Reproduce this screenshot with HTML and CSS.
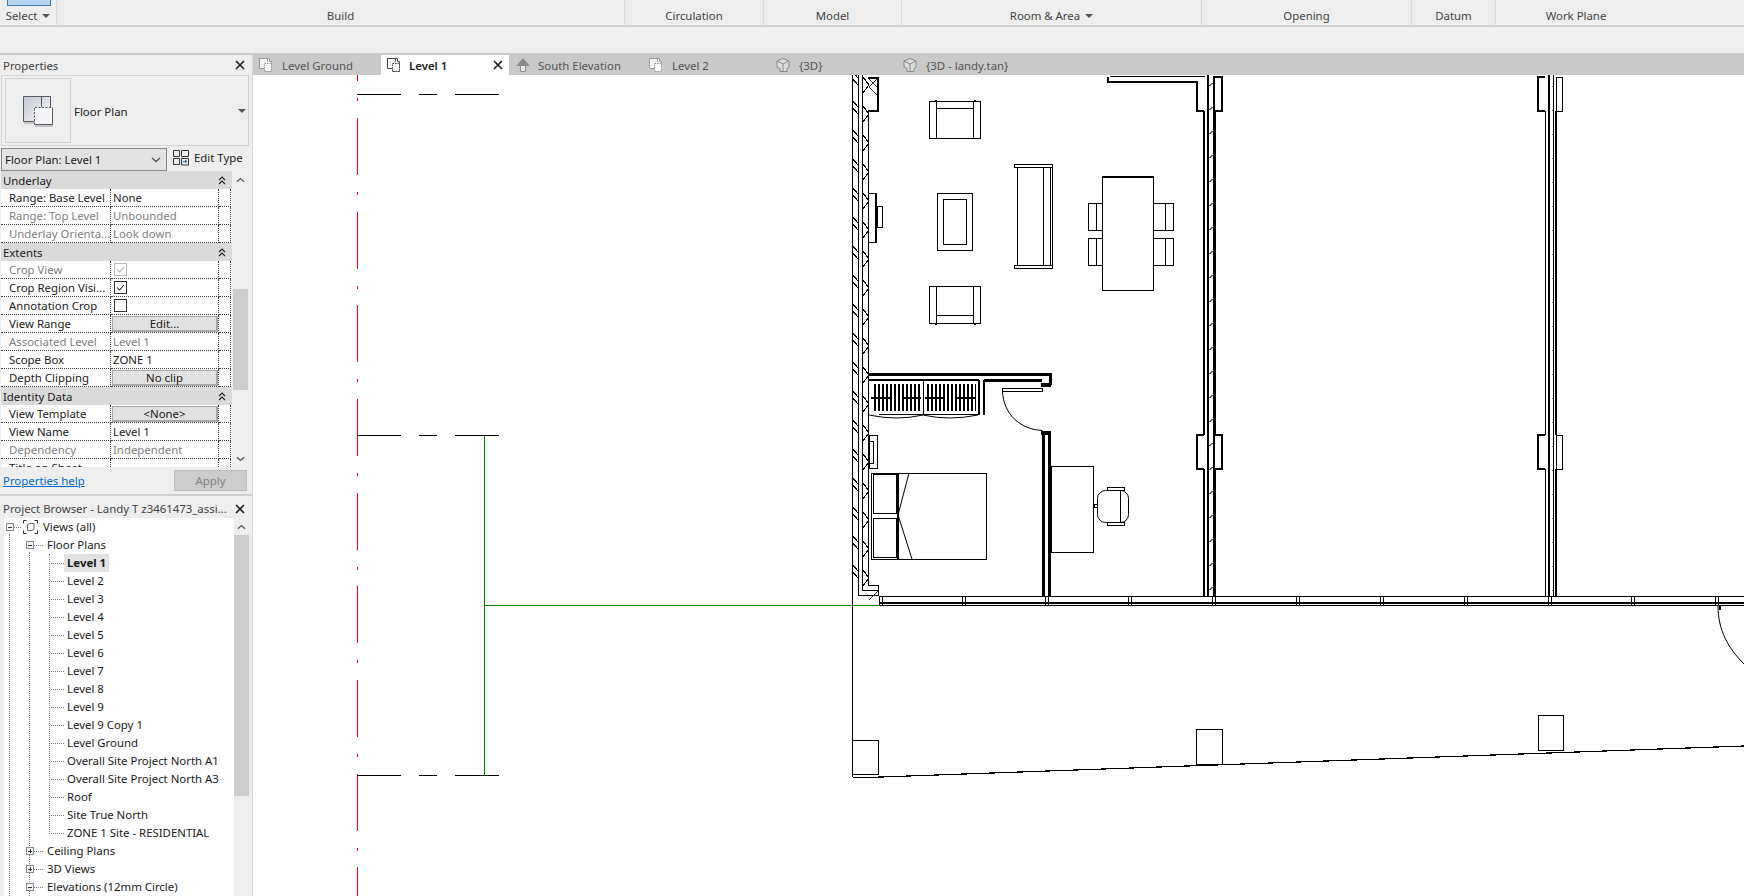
FILE: index.html
```html
<!DOCTYPE html>
<html lang="en">
<head>
    <meta charset="UTF-8">
    <title>Level 1 - Floor Plan</title>
    <link rel="stylesheet" href="styles.css">
</head>
<body>
    <!-- shared icons -->
    <svg class="defs" width="0" height="0">
        <symbol id="plan" viewBox="0 0 16 16">
            <path d="M1.5 1.5h10v3h2v10h-7v-3h-5z" fill="#f4f4f4" stroke="currentColor"/>
            <path d="M6.5 6.5h7v8h-7z" fill="#fff" stroke="currentColor" stroke-dasharray="1.5 1"/>
            <path d="M9.5 1.5v3" stroke="currentColor"/>
        </symbol>
        <symbol id="elev" viewBox="0 0 16 16">
            <path d="M8 1l7 8h-4v6H5V9H1z" fill="#e8e8e8" stroke="none"/>
            <path d="M8 1l7 8H1z" fill="#8a8a8a"/>
            <path d="M5.5 9v5.5h5V9" fill="none" stroke="#8a8a8a"/>
        </symbol>
        <symbol id="cube" viewBox="0 0 16 16">
            <path d="M8 1.5l6 2.5v6l-2 1.5v3H5v-3l-3-1.5V4z" fill="#dcdcdc" stroke="#8a8a8a"/>
            <path d="M2 4l6 3 6-3M8 7v7" fill="none" stroke="#8a8a8a"/>
        </symbol>
        <symbol id="close" viewBox="0 0 12 12">
            <path d="M2 2l8 8M10 2l-8 8" stroke="#222" stroke-width="1.7" fill="none"/>
        </symbol>
        <symbol id="up" viewBox="0 0 10 6">
            <path d="M1 5l4-3.5L9 5" stroke="#555" stroke-width="1.4" fill="none"/>
        </symbol>
        <symbol id="down" viewBox="0 0 10 6">
            <path d="M1 1l4 3.5L9 1" stroke="#555" stroke-width="1.4" fill="none"/>
        </symbol>
        <symbol id="fold" viewBox="0 0 8 9">
            <path d="M1 4l3-3 3 3M1 8l3-3 3 3" stroke="#222" stroke-width="1.2" fill="none"/>
        </symbol>
        <symbol id="tick" viewBox="0 0 13 13">
            <path d="M2.5 6.5l3 3 5-6" stroke="currentColor" stroke-width="1.2" fill="none"/>
        </symbol>
    </svg>

    <div class="ribbon">
        <div class="blue-tool"></div>
        <div class="group g-select">Select <span class="caret"></span></div>
        <div class="group g-build">Build</div>
        <div class="group g-circ">Circulation</div>
        <div class="group g-model">Model</div>
        <div class="group g-room">Room &amp; Area <span class="caret"></span></div>
        <div class="group g-open">Opening</div>
        <div class="group g-datum">Datum</div>
        <div class="group g-work">Work Plane</div>
    </div>
    <div class="options-bar"></div>

    <div class="workspace">
        <div class="side">
            <div class="panel-title">
                <span>Properties</span>
                <svg class="x-btn"><use href="#close"/></svg>
            </div>
            <div class="type-box">
                <div class="type-thumb">
                    <svg width="32" height="32" viewBox="0 0 32 32">
                        <defs>
                            <linearGradient id="sheet" x1="0" y1="0" x2="1" y2="1">
                                <stop offset="0" stop-color="#c4c8d2"/>
                                <stop offset="1" stop-color="#f6f6f8"/>
                            </linearGradient>
                        </defs>
                        <path d="M1.5 1.5h27v25h-27z" fill="url(#sheet)" stroke="#555a66"/>
                        <path d="M19.500 1.500v11" stroke="#555a66" fill="none"/>
                        <path d="M12.500 12.500h18v17h-18z" fill="#f5f5f7" stroke="none"/>
                        <path d="M12.500 29.500v-17h18" fill="none" stroke="#555a66" stroke-dasharray="2 1.500"/>
                        <path d="M30.500 12.500v17h-18" fill="none" stroke="#555a66"/>
                        <path d="M2 28h10M13 31h18" stroke="#999"/>
                    </svg>
                </div>
                <span class="type-name">Floor Plan</span>
                <span class="caret type-caret"></span>
            </div>
            <div class="selector-row">
                <div class="selector">
                    <span>Floor Plan: Level 1</span>
                    <svg class="sel-chev"><use href="#down"/></svg>
                </div>
                <div class="edit-type">
                    <svg width="17" height="17" viewBox="0 0 17 17" fill="none" stroke="#333">
                        <path d="M.5 1.5h6v6h-6zM.5 9.5h6v6h-6zM8.5 1.5h7v6h-7zM8.5 9.5h7v6.500h-7z"/>
                        <path d="M10 12.500h3M12 11l2 1.500-2 1.500" stroke="#2b6ca8"/>
                    </svg>
                    <span>Edit Type</span>
                </div>
            </div>

            <div class="props">
                <div class="grid">
                    <div class="head">Underlay <svg class="fold"><use href="#fold"/></svg></div>
                    <div class="row"><div class="name">Range: Base Level</div><div class="val">None</div><div class="pad"></div></div>
                    <div class="row off"><div class="name">Range: Top Level</div><div class="val">Unbounded</div><div class="pad"></div></div>
                    <div class="row off"><div class="name">Underlay Orienta...</div><div class="val">Look down</div><div class="pad"></div></div>
                    <div class="head">Extents <svg class="fold"><use href="#fold"/></svg></div>
                    <div class="row off"><div class="name">Crop View</div><div class="val"><span class="check"><svg><use href="#tick"/></svg></span></div><div class="pad"></div></div>
                    <div class="row"><div class="name">Crop Region Visi...</div><div class="val"><span class="check"><svg><use href="#tick"/></svg></span></div><div class="pad"></div></div>
                    <div class="row"><div class="name">Annotation Crop</div><div class="val"><span class="check"></span></div><div class="pad"></div></div>
                    <div class="row"><div class="name">View Range</div><div class="val btn-cell"><span class="cell-btn">Edit...</span></div><div class="pad"></div></div>
                    <div class="row off"><div class="name">Associated Level</div><div class="val">Level 1</div><div class="pad"></div></div>
                    <div class="row"><div class="name">Scope Box</div><div class="val">ZONE 1</div><div class="pad"></div></div>
                    <div class="row"><div class="name">Depth Clipping</div><div class="val btn-cell"><span class="cell-btn">No clip</span></div><div class="pad"></div></div>
                    <div class="head">Identity Data <svg class="fold"><use href="#fold"/></svg></div>
                    <div class="row"><div class="name">View Template</div><div class="val btn-cell"><span class="cell-btn">&lt;None&gt;</span></div><div class="pad"></div></div>
                    <div class="row"><div class="name">View Name</div><div class="val">Level 1</div><div class="pad"></div></div>
                    <div class="row off"><div class="name">Dependency</div><div class="val">Independent</div><div class="pad"></div></div>
                    <div class="row"><div class="name">Title on Sheet</div><div class="val"></div><div class="pad"></div></div>
                </div>
                <div class="scrollbar props-bar">
                    <svg class="arrow"><use href="#up"/></svg>
                    <div class="thumb"></div>
                    <svg class="arrow"><use href="#down"/></svg>
                </div>
            </div>
            <div class="props-foot">
                <a class="help">Properties help</a>
                <span class="apply">Apply</span>
            </div>

            <div class="panel-title browser-title">
                <span>Project Browser - Landy T z3461473_assi...</span>
                <svg class="x-btn"><use href="#close"/></svg>
            </div>
            <div class="browser">
                <div class="tree">
                    <div class="guide guide-a"></div>
                    <div class="guide guide-b"></div>
                    <div class="guide guide-c"></div>
                    <div class="node lv0"><span class="box"></span><span class="stub"></span>
                        <svg class="views-icon" width="15" height="14" viewBox="0 0 15 14" fill="none" stroke="#333">
                            <path d="M.5 3.500v-3h3M11.500.5h3v3M14.500 10.500v3h-3M3.500 13.500h-3v-3"/>
                            <path d="M4.500 4.500l2-1h4.500v5.500l-2 1.500h-4.500z" stroke="#666"/>
                        </svg>
                        <span class="label">Views (all)</span></div>
                    <div class="node lv1"><span class="box"></span><span class="stub"></span><span class="label">Floor Plans</span></div>
                    <div class="node lv2 current"><span class="label">Level 1</span></div>
                    <div class="node lv2"><span class="label">Level 2</span></div>
                    <div class="node lv2"><span class="label">Level 3</span></div>
                    <div class="node lv2"><span class="label">Level 4</span></div>
                    <div class="node lv2"><span class="label">Level 5</span></div>
                    <div class="node lv2"><span class="label">Level 6</span></div>
                    <div class="node lv2"><span class="label">Level 7</span></div>
                    <div class="node lv2"><span class="label">Level 8</span></div>
                    <div class="node lv2"><span class="label">Level 9</span></div>
                    <div class="node lv2"><span class="label">Level 9 Copy 1</span></div>
                    <div class="node lv2"><span class="label">Level Ground</span></div>
                    <div class="node lv2"><span class="label">Overall Site Project North A1</span></div>
                    <div class="node lv2"><span class="label">Overall Site Project North A3</span></div>
                    <div class="node lv2"><span class="label">Roof</span></div>
                    <div class="node lv2"><span class="label">Site True North</span></div>
                    <div class="node lv2"><span class="label">ZONE 1 Site - RESIDENTIAL</span></div>
                    <div class="node lv1"><span class="box plus"></span><span class="stub"></span><span class="label">Ceiling Plans</span></div>
                    <div class="node lv1"><span class="box plus"></span><span class="stub"></span><span class="label">3D Views</span></div>
                    <div class="node lv1"><span class="box"></span><span class="stub"></span><span class="label">Elevations (12mm Circle)</span></div>
                </div>
                <div class="scrollbar tree-bar">
                    <svg class="arrow"><use href="#up"/></svg>
                    <div class="thumb"></div>
                </div>
            </div>
        </div>

        <div class="main">
            <div class="tabs">
                <div class="tab t-ground"><svg class="tab-icon"><use href="#plan"/></svg>Level Ground</div>
                <div class="tab active"><svg class="tab-icon"><use href="#plan"/></svg><span>Level 1</span><svg class="tab-x"><use href="#close"/></svg></div>
                <div class="tab t-south"><svg class="tab-icon"><use href="#elev"/></svg>South Elevation</div>
                <div class="tab t-level2"><svg class="tab-icon"><use href="#plan"/></svg>Level 2</div>
                <div class="tab t-3d"><svg class="tab-icon"><use href="#cube"/></svg>{3D}</div>
                <div class="tab t-3dl"><svg class="tab-icon"><use href="#cube"/></svg>{3D - landy.tan}</div>
            </div>

            <!-- drawing uses page coordinates, easier to check against the plan -->
            <svg class="plan" width="1491" height="821" viewBox="253 75 1491 821" fill="none" stroke="#000" shape-rendering="crispEdges">
                <defs>
                    <pattern id="hatch-l" x="852" y="77" width="17" height="29" patternUnits="userSpaceOnUse">
                        <path d="M0 1l6 7M0 23l6 7M0 -6l6 7M11 0l6 8-6 8" stroke="#000"/>
                    </pattern>
                    <pattern id="hatch-r" x="1208" y="75" width="8" height="24" patternUnits="userSpaceOnUse">
                        <path d="M0 12l6-5" stroke="#666"/>
                    </pattern>
                    <g id="mullion"><path d="M.5 596v10M3.500 596v10"/></g>
                </defs>

                <!-- crop region and section marks -->
                <path d="M357.500 24.330V896" stroke="#f00000" stroke-dasharray="57 17 3 16.670"/>
                <path d="M357 94.500h44M419 94.500h18M455 94.500h44M357 435.500h44M419 435.500h18M455 435.500h44M357 775.500h44M419 775.500h18M455 775.500h44"/>
                <path d="M484.500 436v340M485 605.500h394" stroke="#008000"/>

                <!-- left wall -->
                <path d="M852.500 75V777M858.500 75V595h20M862.500 75V590h16M868.500 111V585h10v11"/>
                <rect x="852" y="75" width="17" height="516" fill="url(#hatch-l)" stroke="none"/>
                <path d="M868 78h10v33h-10" stroke-width="2"/>
                <path d="M869 79l8 8M877 79l-8 8M869 87l8 8" stroke="#333"/>
                <path d="M869 193.500h7v49h-7"/>
                <path d="M876 193v49" stroke-width="2"/>
                <path d="M877.500 206.500h5v21h-5z"/>
                <path d="M869.500 435.500h8v33h-8zM869.500 441.500h4v22h-4z"/>
                <path d="M869 600l9-9" stroke="#333"/>

                <!-- living room furniture -->
                <path d="M929.500 101.500h51v37h-51zM936.500 101.500v37M973.500 101.500v37M936.500 108.500h37M935 100.500h2M974 100.500h2"/>
                <path d="M929.500 286.500h51v37h-51zM936.500 286.500v37M973.500 286.500v37M936.500 315.500h37M935 324.500h2M974 324.500h2"/>
                <path d="M937.500 193.500h35v57h-35zM943.500 199.500h23v45h-23z"/>
                <path d="M1014.500 164.500h38v3h-38zM1014.500 265.500h38v3h-38zM1017.500 167.500v98M1052.500 167.500v98M1043.500 167.500v98M1050.500 167.500v98"/>
                <path d="M1102.500 177.500h51v113h-51z"/>
                <path d="M1102 177h52" stroke-width="2"/>
                <path d="M1102.500 203.500h-14v27h14M1096.500 203.500v27M1102.500 238.500h-14v27h14M1096.500 238.500v27"/>
                <path d="M1153.500 203.500h20v27h-20M1165.500 203.500v27M1153.500 238.500h20v27h-20M1165.500 238.500v27"/>

                <!-- wall at top of the apartment -->
                <path d="M1108 77v5h89v29h7" stroke-width="2"/>
                <path d="M1110 76.500h95"/>

                <!-- party wall 1 -->
                <path d="M1204 111V435" stroke-width="2"/>
                <path d="M1208 75V596" stroke-width="2"/>
                <path d="M1214.500 111V435M1214.500 469V596" stroke-width="3"/>
                <path d="M1204 469V596" stroke-width="2"/>
                <rect x="1209" y="75" width="5" height="521" fill="url(#hatch-r)" stroke="none"/>
                <path d="M1214 77h8v34h-8zM1214 435h8v34h-8z" stroke-width="2"/>
                <path d="M1204 435h-7v34h7" stroke-width="2"/>

                <!-- party wall 2 -->
                <path d="M1545.500 111V435M1545.500 469V596M1553.500 75V596"/>
                <path d="M1549 75V596M1556 111V435M1556 469V596" stroke-width="2"/>
                <rect x="1550" y="75" width="3" height="521" fill="url(#hatch-r)" stroke="none"/>
                <path d="M1545 77h-7v34h7M1545 435h-7v34h7" stroke-width="2"/>
                <path d="M1556 77h6v34h-6zM1556 435h6v34h-6z"/>

                <!-- wardrobe -->
                <path d="M869 374.500h181v10" stroke-width="3"/>
                <path d="M869 380h110" stroke-width="2"/>
                <path d="M984 380.500h58" stroke-width="3"/>
                <path d="M878.500 414.500h100"/>
                <path d="M979 380v35M984 380v35" stroke-width="2"/>
                <path d="M923.500 381v33"/>
                <path d="M874 397.500h47M927 397.500h49" stroke-width="27" stroke-dasharray="2 2"/>
                <path d="M871 397.500h19M902 397.500h19M925 397.500h20M955 397.500h21" stroke-width="2"/>
                <path d="M869 415q28 6 54 0q26 6 55 0" shape-rendering="auto"/>

                <!-- door -->
                <path d="M1002.500 388.500h40v3h-40z"/>
                <path d="M1002.500 391.500c1 22 17 38 40 39" shape-rendering="auto"/>
                <path d="M1041 385h10M1041 432.500h10" stroke-width="4"/>
                <path d="M1043.500 434V596M1049.500 434V596" stroke-width="3"/>

                <!-- bed -->
                <path d="M871.500 473.500h115v86h-115z"/>
                <path d="M873.500 474.500h23v39h-23zM873.500 518.500h23v39h-23z"/>
                <path d="M897.500 474v85" stroke-width="2"/>
                <path d="M909 473l-11 42 14 44" shape-rendering="auto"/>

                <!-- desk and chair -->
                <path d="M1051.500 466.500h42v86h-42z"/>
                <rect x="1097.500" y="490.500" width="31" height="32" rx="8" shape-rendering="auto"/>
                <path d="M1120.500 491v31M1107.500 487.500h17v3h-17zM1107.500 522.500h17v3h-17zM1094.500 504.500h3v3h-3z"/>

                <!-- glazing along the corridor -->
                <path d="M879 596.500h865M879 605.500h865"/>
                <path d="M879 603h865" stroke-width="2"/>
                <use href="#mullion" x="879"/><use href="#mullion" x="962"/><use href="#mullion" x="1045"/>
                <use href="#mullion" x="1128"/><use href="#mullion" x="1212"/><use href="#mullion" x="1296"/>
                <use href="#mullion" x="1380"/><use href="#mullion" x="1464"/><use href="#mullion" x="1548"/>
                <use href="#mullion" x="1631"/><use href="#mullion" x="1715"/>

                <!-- door at far right -->
                <path d="M1718 606c0 24 10 42 26 58" shape-rendering="auto"/>
                <path d="M1720 606v4" stroke-width="2"/>

                <!-- columns and slanted edge -->
                <path d="M852.500 740.500h26v33.500h-26M1196.500 729.500h26v34.500h-26zM1538.500 715.500h25v34.500h-25z"/>
                <path d="M853 777.500h14L1744 746" stroke-width="1.200"/>
            </svg>
        </div>
    </div>
</body>
</html>
```

FILE: styles.css
```css
* {
    box-sizing: border-box;
}
html, body {
    margin: 0;
    height: 896px;
    overflow: hidden;
}
body {
    background: #eeeeee;
    font-family: "Noto Sans", sans-serif;
    font-size: 11.4px;
    color: #1a1a1a;
}
.defs {
    position: absolute;
}

/* ribbon */
.ribbon {
    position: relative;
    display: flex;
    height: 27px;
    border-bottom: 2px solid #d0d0d0;
    color: #444;
}
.blue-tool {
    position: absolute;
    left: 7px;
    top: -1px;
    width: 44px;
    height: 7px;
    background: #b3d4f1;
    border: 1px solid #3d7ab5;
}
.group {
    display: flex;
    align-items: flex-end;
    justify-content: center;
    gap: 5px;
    height: 25px;
    padding-bottom: 2px;
    border-right: 1px solid #dcdcdc;
}
.g-select { width: 57px; }
.g-build { width: 568px; }
.g-circ { width: 139px; }
.g-model { width: 138px; }
.g-room { width: 300px; }
.g-open { width: 210px; }
.g-datum { width: 84px; }
.g-work { width: 160px; border-right: none; }
.caret {
    display: inline-block;
    width: 0;
    height: 0;
    margin-bottom: 5px;
    border-left: 4px solid transparent;
    border-right: 4px solid transparent;
    border-top: 4px solid #555;
}
.options-bar {
    height: 26px;
}

.workspace {
    display: flex;
    height: 843px;
}

/* left column */
.side {
    width: 253px;
    flex: none;
    border-top: 2px solid #c9c9c9;
    border-right: 1px solid #d8d8d8;
}
.panel-title {
    display: flex;
    align-items: center;
    justify-content: space-between;
    height: 20px;
    padding: 0 6px 0 3px;
    color: #444;
    white-space: nowrap;
}
.x-btn {
    width: 12px;
    height: 12px;
}
.type-box {
    display: flex;
    align-items: center;
    height: 71px;
    margin: 0 3px 2px 1px;
    padding-left: 3px;
    border: 1px solid #d4d4d4;
}
.type-thumb {
    display: flex;
    align-items: center;
    justify-content: center;
    width: 66px;
    height: 65px;
    border: 1px solid #d0d0d0;
}
.type-name {
    margin-left: 3px;
    padding-top: 2px;
}
.type-caret {
    margin: 0 2px 0 auto;
}
.selector-row {
    display: flex;
    height: 23px;
    margin-left: 1px;
}
.selector {
    display: flex;
    align-items: center;
    justify-content: space-between;
    width: 166px;
    padding: 0 5px 0 3px;
    background: #e3e3e3;
    border: 1px solid #8a8a8a;
}
.sel-chev {
    width: 10px;
    height: 6px;
}
.edit-type {
    display: flex;
    align-items: center;
    gap: 4px;
    height: 19px;
    margin-left: 6px;
}

/* property grid */
.props {
    display: flex;
    height: 296px;
    overflow: hidden;
}
.grid {
    width: 231px;
    margin-left: 1px;
    flex: none;
}
.head {
    display: flex;
    align-items: center;
    justify-content: space-between;
    height: 18px;
    padding: 0 6px 0 2px;
    background: #dadada;
}
.fold {
    width: 8px;
    height: 9px;
}
.row {
    display: grid;
    grid-template-columns: 110px 108px 12px;
    height: 18px;
    background: #fff;
}
.row > div {
    display: flex;
    align-items: center;
    border-right: 1px dotted #444;
    border-bottom: 1px dotted #444;
    white-space: nowrap;
    overflow: hidden;
}
.name {
    padding-left: 8px;
}
.val {
    padding-left: 2px;
}
.off {
    color: #808080;
}
.check {
    display: block;
    width: 13px;
    height: 13px;
    margin-left: 1px;
    border: 1px solid #333;
}
.check svg {
    display: block;
    width: 11px;
    height: 11px;
}
.off .check {
    border-color: #bbb;
    color: #aaa;
}
.btn-cell {
    padding: 0;
}
.cell-btn {
    flex: 1;
    height: 16px;
    line-height: 13px;
    margin-left: 1px;
    text-align: center;
    background: #e1e1e1;
    border: 1px solid #a8a8a8;
    border-width: 1px 2px 2px 1px;
}
.scrollbar {
    display: flex;
    flex-direction: column;
    align-items: center;
}
.props-bar {
    width: 15px;
    margin-left: 1px;
}
.arrow {
    flex: none;
    width: 9px;
    height: 6px;
}
.props-bar .arrow:first-child {
    margin-top: 6px;
}
.props-bar .thumb {
    width: 15px;
    height: 101px;
    margin: 106px 0 66px;
}
.thumb {
    background: #cdcdcd;
}
.props-foot {
    display: flex;
    align-items: center;
    justify-content: space-between;
    height: 27px;
    padding: 0 5px 1px 3px;
}
.help {
    color: #0066cc;
    text-decoration: underline;
}
.apply {
    width: 73px;
    height: 21px;
    line-height: 20px;
    text-align: center;
    color: #838383;
    background: #cccccc;
    border: 1px solid #bdbdbd;
}
.browser-title {
    height: 24px;
    padding-top: 3px;
    border-top: 2px solid #cfcfcf;
}

/* project browser */
.browser {
    display: flex;
    height: 378px;
}
.tree {
    position: relative;
    width: 230px;
    margin-left: 4px;
    flex: none;
    background: #fff;
    overflow: hidden;
}
.guide {
    position: absolute;
    border-left: 1px dotted #808080;
}
.guide-a { left: 5px; top: 16px; bottom: 0; }
.guide-b { left: 25px; top: 34px; bottom: 0; }
.guide-c { left: 45px; top: 36px; height: 280px; }
.node {
    position: relative;
    display: flex;
    align-items: center;
    height: 18px;
    white-space: nowrap;
}
.lv0 { padding-left: 2px; }
.lv1 { padding-left: 22px; }
.lv2 { padding-left: 60px; }
.lv2::before {
    content: "";
    position: absolute;
    left: 45px;
    width: 15px;
    border-top: 1px dotted #808080;
}
.label {
    height: 18px;
    line-height: 18px;
    padding: 0 3px;
}
.views-icon {
    margin: 0 2px 0 1px;
}
.box {
    position: relative;
    z-index: 1;
    width: 8px;
    height: 8px;
    background: #f4f4f4;
    border: 1px solid #8a8a8a;
}
.box::before {
    content: "";
    position: absolute;
    left: 1px;
    right: 1px;
    top: 2.500px;
    border-top: 1px solid #333;
}
.plus::after {
    content: "";
    position: absolute;
    top: 1px;
    bottom: 1px;
    left: 2.500px;
    border-left: 1px solid #333;
}
.stub {
    width: 7px;
    margin-right: 1px;
    border-top: 1px dotted #808080;
}
.lv1 .stub {
    width: 9px;
}
.current .label {
    background: #e2e2e2;
    font-weight: 700;
}
.tree-bar {
    width: 15px;
}
.tree-bar .arrow {
    margin-top: 6px;
}
.tree-bar .thumb {
    width: 15px;
    height: 261px;
    margin-top: 5px;
}

/* view area */
.main {
    flex: 1;
    min-width: 0;
    background: #fff;
}
.tabs {
    display: flex;
    height: 22px;
    padding-top: 2px;
    background: #c9c9c9;
}
.tab {
    display: flex;
    align-items: center;
    color: #555;
    padding-left: 5px;
    white-space: nowrap;
}
.tab-icon {
    width: 16px;
    height: 16px;
    margin-right: 8px;
    color: #999;
}
.t-ground { width: 128px; }
.active {
    width: 128px;
    color: #222;
    background: #fff;
    font-weight: 600;
    padding-left: 5px;
}
.active .tab-icon {
    color: #444;
    margin-right: 7px;
}
.tab-x {
    width: 12px;
    height: 12px;
    margin-left: auto;
    margin-right: 5px;
}
.t-south { width: 134px; padding-left: 6px; }
.t-south .tab-icon { margin-right: 7px; }
.t-level2 { width: 130px; padding-left: 5px; }
.t-3d { width: 129px; padding-left: 2px; }
.t-3dl { padding-left: 0; }
.plan {
    display: block;
}
```
